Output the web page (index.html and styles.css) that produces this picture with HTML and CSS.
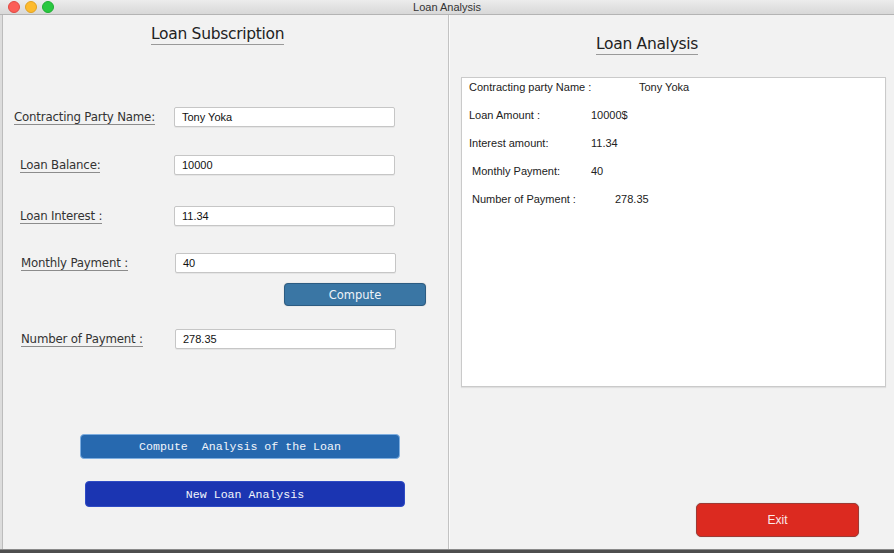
FILE: index.html
```html
<!DOCTYPE html>
<html>
<head>
<meta charset="utf-8">
<title>Loan Analysis</title>
<link rel="stylesheet" href="styles.css">
</head>
<body>
<div class="window">
  <div class="titlebar">
    <div class="lights">
      <span class="light red"></span>
      <span class="light yellow"></span>
      <span class="light green"></span>
    </div>
    <div class="title">Loan Analysis</div>
    <div></div>
  </div>
  <div class="content">
    <div class="edge"></div>
    <div class="pane left">
      <div class="heading sub"><span>Loan Subscription</span></div>
      <div class="row r1"><label class="lbl l-wide"><span>Contracting Party Name:</span></label><div class="input">Tony Yoka</div></div>
      <div class="row r2"><label class="lbl"><span>Loan Balance:</span></label><div class="input">10000</div></div>
      <div class="row r3"><label class="lbl"><span>Loan Interest :</span></label><div class="input">11.34</div></div>
      <div class="row r4"><label class="lbl l-21"><span>Monthly Payment :</span></label><div class="input in-175">40</div></div>
      <div class="compute-wrap"><button class="btn-compute">Compute</button></div>
      <div class="row r5"><label class="lbl l-21"><span>Number of Payment :</span></label><div class="input in-175">278.35</div></div>
      <button class="btn-mono btn-analysis">Compute  Analysis of the Loan</button>
      <button class="btn-mono btn-new">New Loan Analysis</button>
    </div>
    <div class="divider"></div>
    <div class="pane right">
      <div class="heading ana"><span>Loan Analysis</span></div>
      <div class="result">
        <div class="res-row"><span class="k w170">Contracting party Name :</span><span>Tony Yoka</span></div>
        <div class="res-row"><span class="k w122">Loan Amount :</span><span>10000$</span></div>
        <div class="res-row"><span class="k w122">Interest amount:</span><span>11.34</span></div>
        <div class="res-row ind"><span class="k w119">Monthly Payment:</span><span>40</span></div>
        <div class="res-row ind"><span class="k w143">Number of Payment :</span><span>278.35</span></div>
      </div>
      <button class="btn-exit">Exit</button>
    </div>
  </div>
  <div class="bottom"></div>
</div>
</body>
</html>
```

FILE: styles.css
```css
* { box-sizing: border-box; }
html, body { margin: 0; padding: 0; }
body {
  width: 894px;
  height: 553px;
  overflow: hidden;
  background: #f2f2f2;
  font-family: "Liberation Sans", Arial, sans-serif;
}
.window { display: flex; flex-direction: column; height: 553px; }

.titlebar {
  height: 15px;
  display: grid;
  grid-template-columns: 1fr auto 1fr;
  align-items: center;
  background: linear-gradient(#ececec, #d8d8d8);
  border-bottom: 1px solid #b4b4b4;
}
.lights { display: flex; gap: 5px; padding-left: 8px; align-items: center; height: 14px; }
.light { width: 12px; height: 12px; border-radius: 50%; display: block; margin-top: -1px; }
.red { background: #fc5e57; border: 1px solid #e04a43; }
.yellow { background: #fdbb2e; border: 1px solid #e0a224; }
.green { background: #29c840; border: 1px solid #1fae33; }
.title { font-size: 11px; color: #333; line-height: 14px; }

.content { display: flex; height: 534px; }
.edge { width: 3px; background: #dcdcdc; border-right: 1px solid #bcbcbc; }
.divider { width: 2px; border-left: 1px solid #c3c3c3; background: #fbfbfb; }
.pane { display: flex; flex-direction: column; align-items: flex-start; }
.left { width: 445px; padding-top: 10px; }
.right { flex: 1; padding-top: 20px; }

.heading {
  font-family: "DejaVu Sans", sans-serif;
  font-size: 15.5px;
  color: #222;
  line-height: 19px;
  height: 20px;
  letter-spacing: -0.3px;
}
.heading span { display: inline-block; border-bottom: 1px solid #9a9a9a; }
.heading.sub { margin-left: 148px; }
.heading.ana { margin-left: 146px; }

.row { display: flex; align-items: center; height: 20px; }
.r1 { margin-top: 62px; }
.r2 { margin-top: 28px; }
.r3 { margin-top: 31px; }
.r4 { margin-top: 27px; }
.r5 { margin-top: 23px; }
.lbl {
  width: 171px;
  padding-left: 17px;
  font-family: "DejaVu Sans", sans-serif;
  font-size: 11.8px;
  letter-spacing: -0.2px;
  color: #333;
}
.lbl span { display: inline-block; border-bottom: 1px solid #8c8c8c; line-height: 14px; }
.lbl.l-wide { padding-left: 11px; }
.lbl.l-21 { padding-left: 18px; }
.input {
  width: 221px;
  height: 20px;
  background: #fff;
  border: 1px solid #c6c6c6;
  border-radius: 2px;
  box-shadow: 0 1px 0 rgba(0,0,0,0.05);
  font-size: 11px;
  color: #111;
  padding-left: 7px;
  line-height: 18px;
}
.input.in-175 { margin-left: 1px; }

.compute-wrap { margin-top: 10px; padding-left: 281px; }
.btn-compute {
  width: 142px;
  height: 23px;
  background: #3a76a4;
  border: 1px solid #2c5c82;
  border-radius: 4px;
  color: #eef3f8;
  font-family: "DejaVu Sans", sans-serif;
  font-size: 11.5px;
  padding: 0;
  box-shadow: 0 0 1px rgba(0,0,0,0.3);
}

.btn-mono {
  width: 320px;
  padding: 0;
  font-family: "Liberation Mono", "Courier New", monospace;
  font-size: 11.6px;
  white-space: pre;
  color: #f2f5fb;
  border-radius: 4px;
}
.btn-analysis {
  margin-top: 85px;
  margin-left: 77px;
  height: 25px;
  background: #2769af;
  border: 1px solid #7eaee0;
}
.btn-new {
  margin-top: 22px;
  margin-left: 82px;
  height: 26px;
  background: #1b35b2;
  border: 1px solid #2f4bc4;
}

.result {
  margin-top: 22px;
  margin-left: 11px;
  width: 425px;
  height: 310px;
  background: #fff;
  border: 1px solid #cacaca;
  box-shadow: 0 1px 1px rgba(0,0,0,0.08);
  padding-top: 2px;
}
.res-row {
  display: flex;
  height: 28px;
  line-height: 14px;
  padding-left: 7px;
  font-size: 11px;
  color: #222;
}
.res-row.ind { padding-left: 10px; }
.k.w170 { width: 170px; }
.k.w122 { width: 122px; }
.k.w119 { width: 119px; }
.k.w143 { width: 143px; }

.btn-exit {
  margin-top: 116px;
  margin-left: 246px;
  width: 163px;
  height: 34px;
  background: #dc2a20;
  border: 1px solid #9e3a34;
  border-radius: 5px;
  color: #fbeaea;
  font-family: "Liberation Sans", Arial, sans-serif;
  font-size: 12px;
  padding: 0;
  box-shadow: 0 0 1px rgba(0,0,0,0.3);
}

.bottom { height: 4px; background: #4e4e4e; border-top: 1px solid #8a8a8a; }
```
